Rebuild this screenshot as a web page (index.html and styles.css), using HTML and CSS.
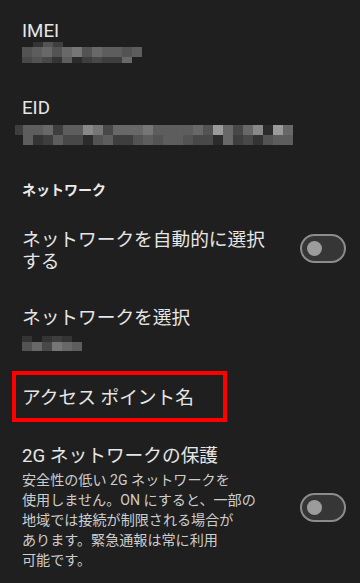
FILE: index.html
```html
<!DOCTYPE html>
<html lang="ja">
<head>
<meta charset="utf-8">
<title>SIM 設定</title>
<link rel="stylesheet" href="styles.css">
</head>
<body>
<div class="list">
  <div class="pref pref-imei">
    <div class="pref-text">
      <div class="title">IMEI</div>
      <div class="mosaic mosaic-imei" aria-label="非表示">
        <div class="mrow h5 ml11"><span class="g2"></span><span class="g5"></span><span class="g3"></span></div>
        <div class="mrow h10"><span class="g5"></span><span class="g6"></span><span class="g7"></span><span class="g5"></span><span class="g7"></span><span class="g8"></span><span class="g5"></span><span class="g7"></span><span class="g6"></span><span class="g6"></span><span class="g5"></span><span class="g6"></span></div>
        <div class="mrow h6"><span class="g4"></span><span class="g5"></span><span class="g4"></span><span class="g2"></span><span class="g6"></span><span class="g1"></span><span class="g3"></span><span class="g4"></span><span class="g3"></span><span class="g3"></span><span class="g7"></span></div>
      </div>
    </div>
  </div>

  <div class="pref pref-eid">
    <div class="pref-text">
      <div class="title">EID</div>
      <div class="mosaic mosaic-eid" aria-label="非表示">
        <div class="mrow h10"><span class="g3 part"></span><span class="g6"></span><span class="g6"></span><span class="g7"></span><span class="g3"></span><span class="g6"></span><span class="g6"></span><span class="g9"></span><span class="g8"></span><span class="g4"></span><span class="g7"></span><span class="g7"></span><span class="g7"></span><span class="g8"></span><span class="g6"></span><span class="g6"></span><span class="g6"></span><span class="g6"></span><span class="g7"></span><span class="g5"></span><span class="g10"></span><span class="g7"></span><span class="g4"></span><span class="g7"></span><span class="g9"></span><span class="g1"></span><span class="g10"></span><span class="g7"></span></div>
        <div class="mrow h10 ml8"><span class="g6"></span><span class="g2"></span><span class="g3"></span><span class="g6"></span><span class="g4"></span><span class="g4"></span><span class="g1"></span><span class="g5"></span><span class="g6"></span><span class="g3"></span><span class="g3"></span><span class="g5"></span><span class="g6"></span><span class="g5"></span><span class="g6"></span><span class="g6"></span><span class="g5"></span><span class="g4"></span><span class="g4"></span><span class="g1"></span><span class="g7"></span><span class="g3"></span><span class="g4"></span><span class="g2"></span><span class="g5"></span><span class="g6"></span><span class="g6"></span></div>
      </div>
    </div>
  </div>

  <div class="category">ネットワーク</div>

  <div class="pref pref-auto">
    <div class="pref-text">
      <div class="title">ネットワークを自動的に選択<br>する</div>
    </div>
    <div class="switch switch-raise"><div class="thumb"></div></div>
  </div>

  <div class="pref pref-select">
    <div class="pref-text">
      <div class="title">ネットワークを選択</div>
      <div class="mosaic mosaic-select" aria-label="非表示">
        <div class="mrow h6"><span class="g2"></span><span class="gx"></span><span class="g2"></span><span class="g3"></span><span class="g2"></span></div>
        <div class="mrow h9"><span class="g5"></span><span class="g7"></span><span class="g4"></span><span class="g8"></span><span class="g7"></span><span class="g6"></span></div>
      </div>
    </div>
  </div>

  <div class="pref pref-apn">
    <div class="pref-text">
      <div class="title">アクセス ポイント名</div>
    </div>
    <div class="highlight"></div>
  </div>

  <div class="pref pref-2g">
    <div class="pref-text">
      <div class="title">2G ネットワークの保護</div>
      <div class="summary">安全性の低い 2G ネットワークを<br>使用しません。ON にすると、一部の<br>地域では接続が制限される場合が<br>あります。緊急通報は常に利用<br>可能です。</div>
    </div>
    <div class="switch"><div class="thumb"></div></div>
  </div>
</div>
</body>
</html>
```

FILE: styles.css
```css
* {
  box-sizing: border-box;
}

html,
body {
  margin: 0;
  padding: 0;
}

body {
  width: 360px;
  height: 583px;
  overflow: hidden;
  background: #1f1f1f;
  font-family: Roboto, "Noto Sans CJK JP", sans-serif;
  color: #e4e4e4;
}

.list {
  padding-top: 3px;
}

.pref {
  position: relative;
  display: flex;
  align-items: center;
  padding: 17px 14px 17px 22px;
}

.pref-text {
  flex: 1;
  min-width: 0;
}

.title {
  font-size: 18.7px;
  line-height: 22px;
  color: #e6e6e6;
}

.summary {
  margin-top: 3px;
  font-size: 14.1px;
  line-height: 20px;
  color: #cdcdcd;
}

.category {
  padding: 18px 22px 12px;
  font-size: 14px;
  line-height: 20px;
  font-weight: 700;
  color: #ececec;
}

/* pixelated (redacted) values */
.mosaic {
  display: flex;
  flex-direction: column;
}

.mosaic-eid {
  margin-top: 6px;
  margin-left: -7px;
}

.mosaic-select {
  margin-top: 7px;
  margin-bottom: 2px;
}

.mrow {
  display: flex;
}

.mrow span {
  flex: none;
  width: 10px;
}

.mrow span.part {
  width: 8px;
}

.ml8 {
  padding-left: 8px;
}

.ml11 {
  padding-left: 11px;
}

.h5 { height: 5px; }
.h6 { height: 6px; }
.h9 { height: 9px; }
.h10 { height: 10px; }

.g1 { background: #2b2b2b; }
.g2 { background: #343434; }
.g3 { background: #3e3e3e; }
.g4 { background: #484848; }
.g5 { background: #535353; }
.g6 { background: #5d5d5d; }
.g7 { background: #686868; }
.g8 { background: #767676; }
.g9 { background: #888888; }
.g10 { background: #9a9a9a; }
.gx { background: transparent; }

/* Material switch, off state */
.switch {
  flex: none;
  display: flex;
  align-items: center;
  width: 46px;
  height: 29px;
  margin-left: 16px;
  padding-left: 5px;
  border: 2px solid #8c8c8c;
  border-radius: 15px;
  background: #363636;
}

.switch-raise {
  margin-bottom: 6px;
}

.thumb {
  width: 15px;
  height: 15px;
  border-radius: 50%;
  background: #9c9c9c;
}

.pref-apn {
  padding-bottom: 20px;
}

.pref-2g {
  padding-top: 16px;
}

/* red annotation frame over the APN row */
.highlight {
  position: absolute;
  top: 1px;
  left: 12px;
  width: 215px;
  height: 51px;
  border: 4px solid #ff0000;
  pointer-events: none;
}
```
